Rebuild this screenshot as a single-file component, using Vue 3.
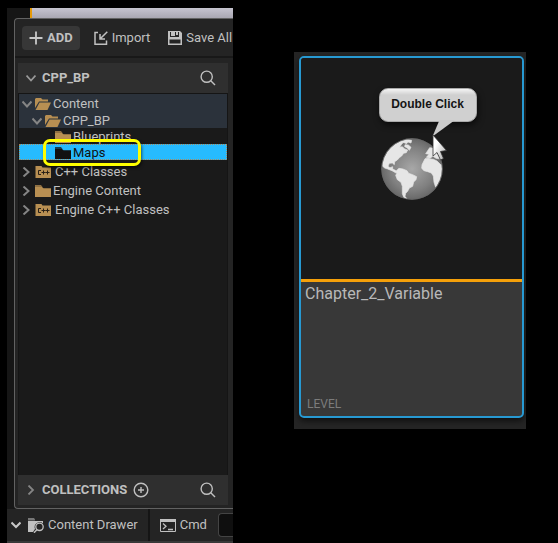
<script setup>
import { ref } from 'vue'

const command = ref('')
const rows = [
  { label: 'Content', icon: 'open', arrow: 'down', level: 0, state: 'parent first' },
  { label: 'CPP_BP', icon: 'open', arrow: 'down', level: 1, state: 'parent' },
  { label: 'Blueprints', icon: 'closed', arrow: '', level: 2, state: '' },
  { label: 'Maps', icon: 'closed', arrow: '', level: 2, state: 'selected' },
  { label: 'C++ Classes', icon: 'cpp', arrow: 'right', level: 0, state: 'root' },
  { label: 'Engine Content', icon: 'closed', arrow: 'right', level: 0, state: 'root' },
  { label: 'Engine C++ Classes', icon: 'cpp', arrow: 'right', level: 0, state: 'root' },
]
</script>

<template>
  <main class="page">
    <section class="editor">
      <div class="viewport-strip"></div>
      <div class="drawer">
        <div class="toolbar">
          <button class="tool add" type="button">
            <svg width="14" height="14" viewBox="0 0 14 14"><path d="M7 0.5v13M0.5 7h13" stroke="#c8c8c8" stroke-width="1.8" /></svg>
            <span>ADD</span>
          </button>
          <button class="tool import" type="button">
            <svg width="14" height="14" viewBox="0 0 14 14" fill="none" stroke="#c0c0c0" stroke-width="1.5"><path d="M4 1.500H1v11.700h11.500V9.500M13.300 0.700L6.500 7.500M6 3v5h5" /></svg>
            <span>Import</span>
          </button>
          <button class="tool save" type="button">
            <svg width="14" height="14" viewBox="0 0 14 14"><path fill="#c0c0c0" fill-rule="evenodd" d="M0 0h12l2 2v12H0zM2 1v5h9V1zM1.500 8.500v4h11v-4z" /><path fill="#c0c0c0" d="M3 1h4v4H3zM8 1h2v3H8z" /></svg>
            <span>Save All</span>
          </button>
        </div>
        <div class="sources">
          <header class="section-head">
            <button class="section-title" type="button">
              <svg width="10" height="10" viewBox="0 0 10 10" fill="none" stroke="#9a9a9a" stroke-width="1.8"><path d="M0.500 2.500L5 7.500l4.500-5" /></svg>
              <span>CPP_BP</span>
            </button>
            <button class="icon-button" type="button" aria-label="Search folders">
              <svg width="16" height="16" viewBox="0 0 16 16" fill="none" stroke="#c0c0c0" stroke-width="1.400"><circle cx="6.700" cy="6.700" r="5.600" /><path d="M10.800 10.800L15 15" /></svg>
            </button>
          </header>
          <ul class="tree">
            <li v-for="row in rows" :key="row.label" :class="['row', 'level-' + row.level, row.state]">
              <span class="arrow">
                <svg v-if="row.arrow === 'down'" width="10" height="8" viewBox="0 0 10 8" fill="none" stroke="#858585" stroke-width="2"><path d="M0.500 1.500L5 6.500l4.500-5" /></svg>
                <svg v-else-if="row.arrow === 'right'" width="8" height="10" viewBox="0 0 8 10" fill="none" stroke="#858585" stroke-width="2"><path d="M1.500 0.500L6.500 5l-5 4.500" /></svg>
              </span>
              <svg v-if="row.icon === 'open'" class="folder" width="16" height="12" viewBox="0 0 16 12"><path fill="#b88f52" d="M0 1l1-1h5l1.500 1.500H13V3.500H4L0 10z" /><path fill="#b88f52" d="M4.500 4.500H16L12.500 12H0.500z" /></svg>
              <svg v-else-if="row.icon === 'closed'" class="folder" width="16" height="12" viewBox="0 0 16 12"><path fill="currentColor" opacity="0.750" d="M0 0h6l1.500 2H0z" /><path fill="currentColor" d="M0 2h7l1.500 1.200H16V12H0z" /></svg>
              <svg v-else class="folder cpp" width="16" height="12" viewBox="0 0 16 12"><path fill="#b88f52" d="M0.500 0h6l1 1.500H16V12H0.500z" /><path d="M6 4.500H3.500v4H6M6.500 6.500h4M8.500 4.500v4M10.500 6.500h4M12.500 4.500v4" fill="none" stroke="#292016" stroke-width="1" /></svg>
              <span class="label">{{ row.label }}</span>
              <span v-if="row.state === 'selected'" class="highlight"></span>
            </li>
          </ul>
          <footer class="section-head">
            <button class="section-title" type="button">
              <svg width="10" height="10" viewBox="0 0 10 10" fill="none" stroke="#858585" stroke-width="1.800"><path d="M2.500 0.500L7 5l-4.500 4.500" /></svg>
              <span>COLLECTIONS</span>
            </button>
            <button class="icon-button plus" type="button" aria-label="Add collection">
              <svg width="16" height="16" viewBox="0 0 16 16" fill="none" stroke="#c0c0c0" stroke-width="1.400"><circle cx="8" cy="8" r="6.800" /><path d="M8 5v6M5 8h6" /></svg>
            </button>
            <button class="icon-button" type="button" aria-label="Search collections">
              <svg width="16" height="16" viewBox="0 0 16 16" fill="none" stroke="#c0c0c0" stroke-width="1.400"><circle cx="6.700" cy="6.700" r="5.600" /><path d="M10.800 10.800L15 15" /></svg>
            </button>
          </footer>
        </div>
      </div>
      <div class="statusbar">
        <button class="status drawer-toggle" type="button">
          <svg width="10" height="8" viewBox="0 0 10 8" fill="none" stroke="#c8c8c8" stroke-width="2"><path d="M0.500 1.500L5 6l4.500-4.500" /></svg>
          <svg class="browse" width="16" height="15" viewBox="0 0 16 15"><path fill="#777" d="M0 0h6l1 1.500V2.500H0z" /><path fill="#c0c0c0" d="M0 3h15v2.500A5 5 0 0 0 7 11l-2 3H0z" /><circle cx="11.500" cy="8.800" r="3.700" fill="#242424" stroke="#c0c0c0" stroke-width="1.300" /><path d="M9 11.500L6 14.800" stroke="#c0c0c0" stroke-width="1.400" /></svg>
          <span>Content Drawer</span>
        </button>
        <label class="status cmd" for="command">
          <svg width="16" height="13" viewBox="0 0 16 13" fill="none" stroke="#c0c0c0"><path d="M0.500 0.500h15v12H0.500z" /><path d="M0 1.500h16" stroke-width="3" /><path d="M3 4.500L6 7.300 3 10M8 10.500h5" stroke-width="1.300" /></svg>
          <span>Cmd</span>
        </label>
        <input id="command" v-model="command" class="command" type="text" />
      </div>
    </section>

    <section class="stage">
      <article class="asset-frame">
        <a class="asset" href="#level">
          <div class="thumb">
            <div class="globe-wrap">
              <svg class="globe" width="62" height="62" viewBox="33 173 186 186">
                <defs>
                  <radialGradient id="sea"><stop offset="0" stop-color="#a8a8a8" /><stop offset="0.700" stop-color="#808080" /><stop offset="1" stop-color="#686868" /></radialGradient>
                  <clipPath id="disc"><circle cx="126" cy="266" r="90" /></clipPath>
                </defs>
                <circle cx="126" cy="266" r="92" fill="url(#sea)" />
                <g clip-path="url(#disc)" fill="#e6e6e6" stroke="#e6e6e6" stroke-width="2" stroke-linejoin="round">
                  <path d="M36 256L39 230L54 205L74 187L94 181L99 187L94 193L89 201L97 199L104 206L113 209L109 217L101 219L95 227L88 232L82 239L74 244L73 253L67 248L58 249L54 258L60 262L68 259L68 266L76 270L84 276L78 278L66 271L53 266L44 263Z" />
                  <path d="M93 182l16-5 16 3-2 8-9-3-4 5-8-3-7-1zM105 193l10 1 8 7-5 9-7-8-7-3z" />
                  <path d="M79 271L87 264L99 266L111 271L116 279L128 283L140 289L138 298L131 305L128 318L118 323L113 333L107 339L105 348L112 357L102 353L97 340L97 318L93 306L82 298L77 285L81 278Z" />
                  <path d="M160 245L165 235L175 233L180 236L190 237L201 242L211 252L220 256V290L207 302L202 315L197 321L192 306L190 287L184 278L173 274L162 271L155 264L156 253Z" />
                  <path d="M167 220l12-18 15 2 17 32-13-2-10-7-7 7-12-3 8-9z" />
                </g>
                <circle cx="126" cy="266" r="91" fill="none" stroke="#666" stroke-width="2" />
              </svg>
              <div class="callout">
                <span>Double Click</span>
                <svg class="tail" width="24" height="18" viewBox="0 0 24 18"><path d="M7.500 0L0.500 16.500 23 0z" fill="#cacaca" /></svg>
              </div>
              <svg class="pointer" width="16" height="28" viewBox="0 0 16 28">
                <defs><linearGradient id="metal" x1="0" y1="0" x2="1" y2="1"><stop offset="0.300" stop-color="#fff" /><stop offset="1" stop-color="#aaa" /></linearGradient></defs>
                <path d="M1 1v21l4-3.500L8.500 26l3-1.500L8.500 17.500l6-1z" fill="url(#metal)" stroke="#333" stroke-width="0.800" />
              </svg>
            </div>
          </div>
          <div class="details">
            <h2>Chapter_2_Variable</h2>
            <p>LEVEL</p>
          </div>
        </a>
      </article>
    </section>
  </main>
</template>

<style>
body {
  margin: 0;
  background: #000;
}
</style>

<style scoped>
* {
  box-sizing: border-box;
}
.page {
  display: grid;
  grid-template-columns: 226fr 325fr;
  min-height: 100vh;
  padding-left: 7px;
  background: #000;
  color: #c0c0c0;
  font-family: Roboto, sans-serif;
  font-size: 13px;
  line-height: 16px;
}
button {
  margin: 0;
  padding: 0;
  border: 0;
  background: none;
  color: inherit;
  font: inherit;
}
svg {
  display: block;
  flex: none;
}
.editor {
  display: flex;
  flex-direction: column;
  min-width: 0;
  margin-top: 8px;
  overflow: hidden;
  background: #161616;
}
.viewport-strip {
  height: 10px;
  margin-left: 23px;
  border-left: 2px solid #e69a08;
  background: linear-gradient(#c6c4d0, #a9a7b2);
}
.drawer {
  display: flex;
  flex: 1;
  flex-direction: column;
  margin-left: 7px;
  border: 1px solid #626262;
  border-right: 0;
  border-radius: 4px 0 0 4px;
  background: #242424;
}
.toolbar {
  display: flex;
  align-items: center;
  height: 39px;
  padding-left: 7px;
  border-bottom: 2px solid #181818;
  overflow: hidden;
}
.tool {
  display: flex;
  flex: none;
  align-items: center;
  gap: 4px;
  height: 24px;
}
.add {
  padding: 0 7px;
  border-radius: 4px;
  background: #373737;
  font-weight: 700;
}
.import {
  margin-left: 14px;
}
.save {
  margin-left: 18px;
}
.sources {
  display: flex;
  flex: 1;
  flex-direction: column;
  margin-right: 1px;
  padding: 5px 4px 3px 3px;
}
.section-head {
  display: flex;
  align-items: center;
  height: 30px;
  padding: 0 12px 0 8px;
  background: #2f2f2f;
}
.section-title {
  display: flex;
  align-items: center;
  gap: 6px;
  font-weight: 700;
}
.icon-button {
  margin-left: auto;
}
.plus {
  margin-left: 6px;
}
.tree {
  flex: 1;
  margin: 0;
  padding: 0;
  list-style: none;
  border: solid #151515;
  border-width: 1px 1px 0;
  background: #1a1a1a;
}
.row {
  position: relative;
  display: flex;
  align-items: center;
  height: 16px;
  padding-top: 1px;
  padding-left: 3px;
}
.level-1 {
  padding-left: 13px;
}
.level-2 {
  padding-left: 23px;
}
.parent {
  background: #2b323b;
}
.first {
  height: 18px;
  padding-top: 2px;
}
.root {
  height: 19px;
}
.selected + .root {
  margin-top: 2px;
}
.selected {
  background: #26bbff;
  color: #111;
  outline: 1px dotted #a58a60;
  outline-offset: -1px;
}
.arrow {
  flex: none;
  width: 13px;
}
.folder {
  margin-right: 2px;
  color: #b88f52;
}
.cpp {
  margin-right: 4px;
}
.selected .folder {
  color: #111;
}
.label {
  white-space: nowrap;
}
.highlight {
  position: absolute;
  top: -5px;
  left: 24px;
  width: 98px;
  height: 27px;
  border: 3px solid #ff0;
  border-radius: 7px;
  box-shadow: 1px 2px 3px #0008;
  z-index: 1;
}
.statusbar {
  display: flex;
  align-items: center;
  height: 34px;
  border-bottom: 2px solid #383838;
  background: #242424;
}
.status {
  display: flex;
  flex: none;
  align-items: center;
  gap: 4px;
  height: 100%;
}
.drawer-toggle {
  padding: 0 10px 0 4px;
  border-right: 2px solid #151515;
}
.browse {
  margin-left: 3px;
}
.cmd {
  padding: 0 11px 0 10px;
}
.command {
  flex: 1;
  min-width: 0;
  height: 24px;
  padding: 0 12px;
  border: 1px solid #444;
  border-right: 0;
  border-radius: 4px 0 0 4px;
  background: #0f0f0f;
  color: #c0c0c0;
}
.stage {
  min-width: 0;
  padding: 52px 32px 0 61px;
}
.asset-frame {
  padding: 4px 2px 11px 5px;
  background: #252525;
}
.asset {
  display: block;
  border: 2px solid #2799d2;
  border-radius: 5px;
  overflow: hidden;
  background: #383838;
  box-shadow: 0 3px 6px #0009;
  color: #b8b8b8;
  text-decoration: none;
}
.thumb {
  display: flex;
  align-items: center;
  justify-content: center;
  height: 224px;
  border-bottom: 3px solid #f5a00a;
  background: #1a1a1a;
}
.globe-wrap {
  position: relative;
}
.callout {
  position: absolute;
  top: -50px;
  left: -2px;
  width: 98px;
  padding: 7px 0 9px;
  border: 1px solid #aaa;
  border-radius: 9px;
  background: linear-gradient(#f4f4f4, #d0d0d0 6px);
  box-shadow: 1px 3px 6px #0009;
  color: #151515;
  font: bold 12px/16px "Liberation Sans", sans-serif;
  text-align: center;
}
.tail {
  position: absolute;
  top: 31px;
  left: 52px;
}
.pointer {
  position: absolute;
  top: -4px;
  left: 51px;
}
.details {
  display: flex;
  flex-direction: column;
  justify-content: space-between;
  height: 134px;
  padding: 3px 6px 4px 4px;
}
h2 {
  margin: 0;
  font-size: 16px;
  font-weight: 400;
  line-height: 18px;
}
p {
  margin: 0;
  padding-left: 2px;
  color: #7c7c7c;
  font-size: 12px;
}
</style>
